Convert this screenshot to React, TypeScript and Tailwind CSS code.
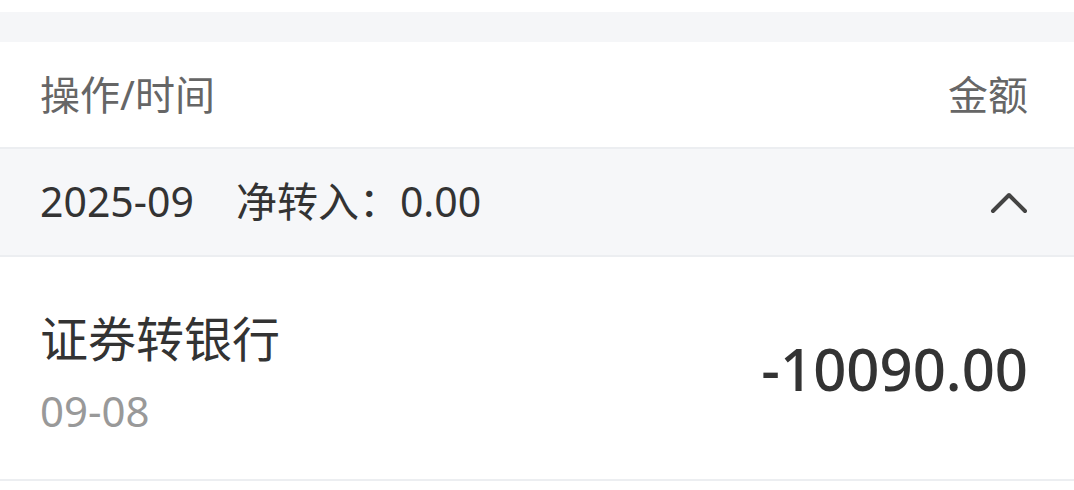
export default function App() {
  return (
    <main
      className="w-[1074px] h-[490px] bg-white overflow-hidden"
      style={{ fontFamily: '"Noto Sans", "Noto Sans CJK SC", sans-serif' }}
    >
      {/* top spacer */}
      <div className="h-[12px] bg-white" />
      <div className="h-[30px] bg-[#f5f6f8]" />

      {/* table header */}
      <div className="h-[107px] flex items-center justify-between pl-[40px] pr-[46px] text-[40px] text-[#666666] border-b-2 border-[#eceef1]">
        <span>操作/时间</span>
        <span>金额</span>
      </div>

      {/* month group */}
      <div className="h-[108px] flex items-center justify-between pl-[40px] pr-[46px] bg-[#f6f7f9] border-b-2 border-[#eceef1] text-[41px] text-[#333333]">
        <div className="flex items-center gap-[42px]">
          <span>2025-09</span>
          <span>净转入：0.00</span>
        </div>
        <svg width="38" height="24" viewBox="0 0 38 24" fill="none">
          <polyline
            points="3,21 19,5 35,21"
            stroke="#444444"
            strokeWidth="4"
            strokeLinecap="round"
            strokeLinejoin="round"
          />
        </svg>
      </div>

      {/* record */}
      <div className="h-[224px] flex items-center justify-between pl-[40px] pr-[46px] border-b-2 border-[#eceef1]">
        <div className="flex flex-col pt-[14px]">
          <span className="text-[48px] leading-[60px] text-[#333333]">证券转银行</span>
          <span className="text-[42px] leading-[60px] mt-[12px] text-[#999999]">09-08</span>
        </div>
        <span className="text-[58px] font-medium text-[#333333]">-10090.00</span>
      </div>
    </main>
  );
}
